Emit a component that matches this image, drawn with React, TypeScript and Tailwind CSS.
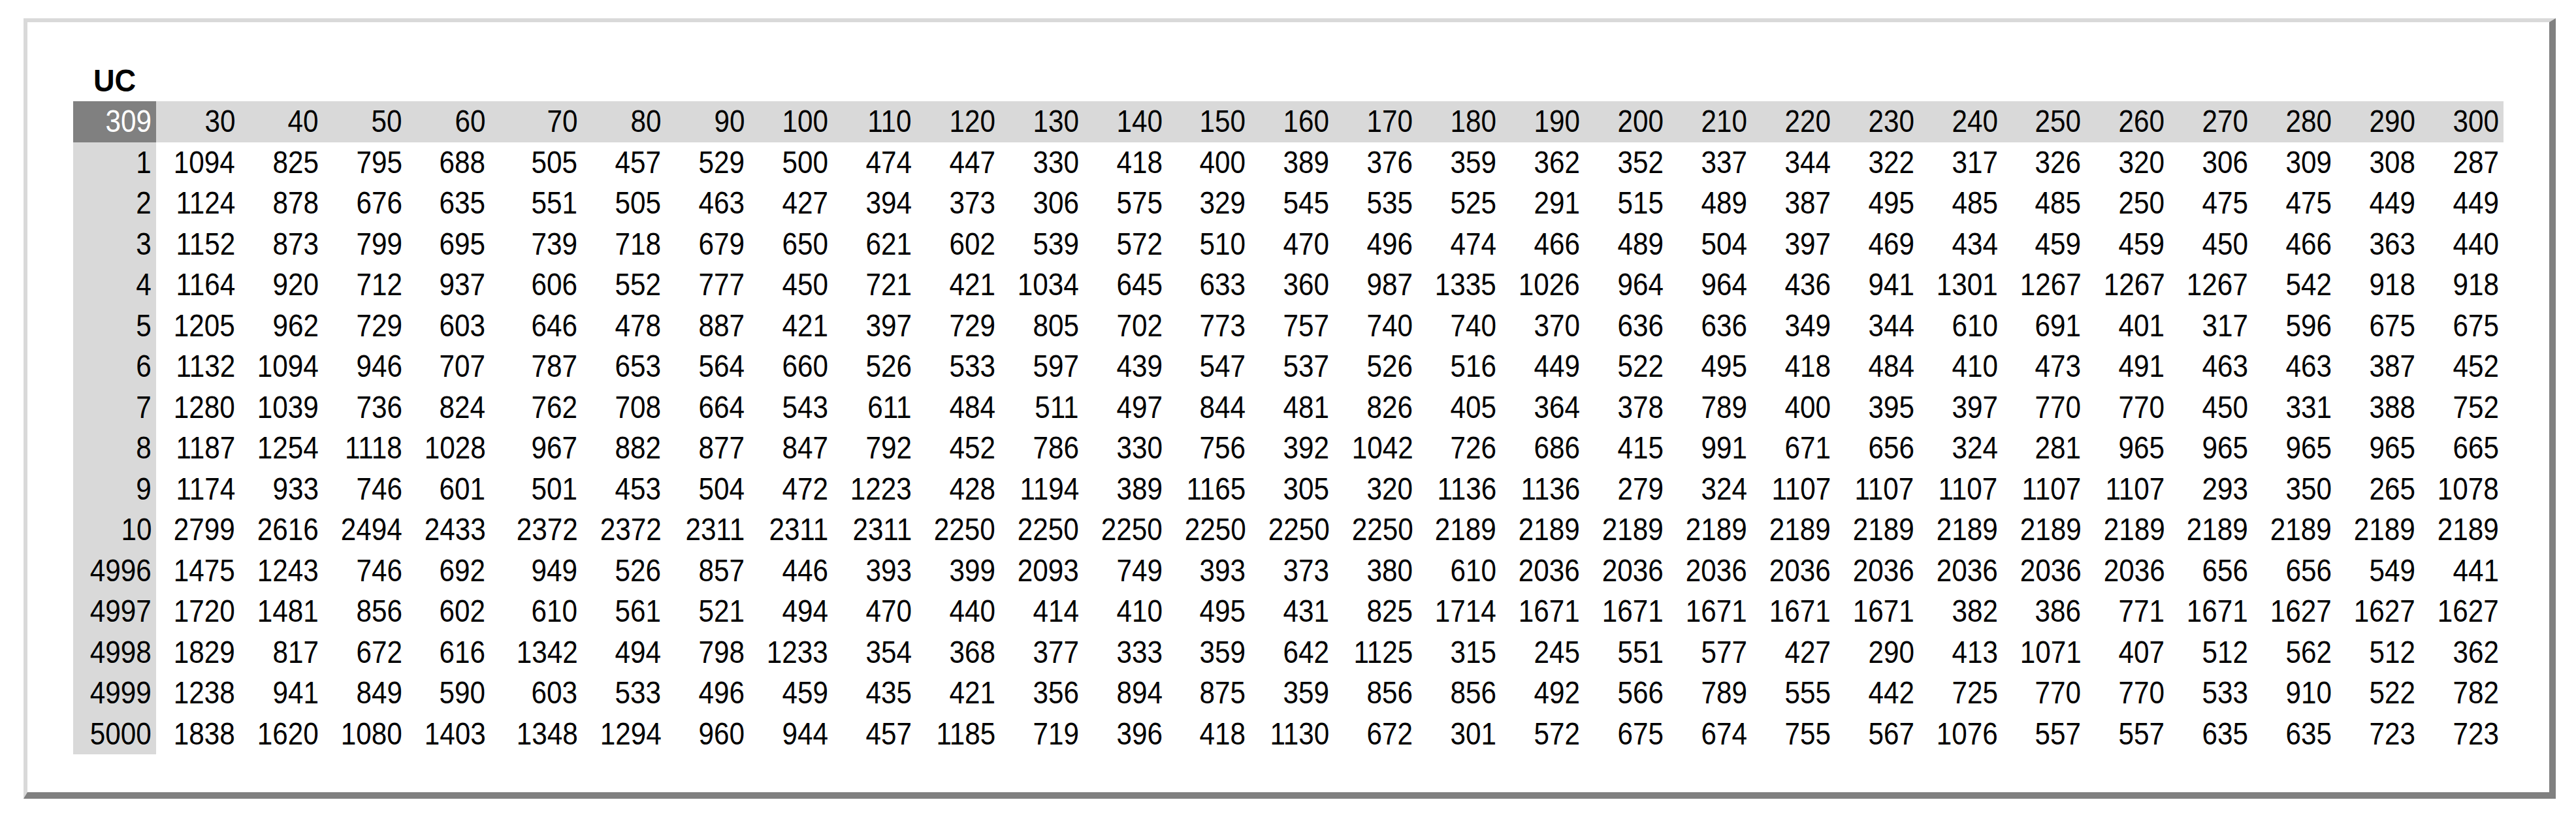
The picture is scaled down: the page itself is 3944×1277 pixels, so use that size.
const cols = [30, 40, 50, 60, 70, 80, 90, 100, 110, 120, 130, 140, 150, 160, 170, 180, 190, 200, 210, 220, 230, 240, 250, 260, 270, 280, 290, 300];

const rows: [number, number[]][] = [
  [1, [1094, 825, 795, 688, 505, 457, 529, 500, 474, 447, 330, 418, 400, 389, 376, 359, 362, 352, 337, 344, 322, 317, 326, 320, 306, 309, 308, 287]],
  [2, [1124, 878, 676, 635, 551, 505, 463, 427, 394, 373, 306, 575, 329, 545, 535, 525, 291, 515, 489, 387, 495, 485, 485, 250, 475, 475, 449, 449]],
  [3, [1152, 873, 799, 695, 739, 718, 679, 650, 621, 602, 539, 572, 510, 470, 496, 474, 466, 489, 504, 397, 469, 434, 459, 459, 450, 466, 363, 440]],
  [4, [1164, 920, 712, 937, 606, 552, 777, 450, 721, 421, 1034, 645, 633, 360, 987, 1335, 1026, 964, 964, 436, 941, 1301, 1267, 1267, 1267, 542, 918, 918]],
  [5, [1205, 962, 729, 603, 646, 478, 887, 421, 397, 729, 805, 702, 773, 757, 740, 740, 370, 636, 636, 349, 344, 610, 691, 401, 317, 596, 675, 675]],
  [6, [1132, 1094, 946, 707, 787, 653, 564, 660, 526, 533, 597, 439, 547, 537, 526, 516, 449, 522, 495, 418, 484, 410, 473, 491, 463, 463, 387, 452]],
  [7, [1280, 1039, 736, 824, 762, 708, 664, 543, 611, 484, 511, 497, 844, 481, 826, 405, 364, 378, 789, 400, 395, 397, 770, 770, 450, 331, 388, 752]],
  [8, [1187, 1254, 1118, 1028, 967, 882, 877, 847, 792, 452, 786, 330, 756, 392, 1042, 726, 686, 415, 991, 671, 656, 324, 281, 965, 965, 965, 965, 665]],
  [9, [1174, 933, 746, 601, 501, 453, 504, 472, 1223, 428, 1194, 389, 1165, 305, 320, 1136, 1136, 279, 324, 1107, 1107, 1107, 1107, 1107, 293, 350, 265, 1078]],
  [10, [2799, 2616, 2494, 2433, 2372, 2372, 2311, 2311, 2311, 2250, 2250, 2250, 2250, 2250, 2250, 2189, 2189, 2189, 2189, 2189, 2189, 2189, 2189, 2189, 2189, 2189, 2189, 2189]],
  [4996, [1475, 1243, 746, 692, 949, 526, 857, 446, 393, 399, 2093, 749, 393, 373, 380, 610, 2036, 2036, 2036, 2036, 2036, 2036, 2036, 2036, 656, 656, 549, 441]],
  [4997, [1720, 1481, 856, 602, 610, 561, 521, 494, 470, 440, 414, 410, 495, 431, 825, 1714, 1671, 1671, 1671, 1671, 1671, 382, 386, 771, 1671, 1627, 1627, 1627]],
  [4998, [1829, 817, 672, 616, 1342, 494, 798, 1233, 354, 368, 377, 333, 359, 642, 1125, 315, 245, 551, 577, 427, 290, 413, 1071, 407, 512, 562, 512, 362]],
  [4999, [1238, 941, 849, 590, 603, 533, 496, 459, 435, 421, 356, 894, 875, 359, 856, 856, 492, 566, 789, 555, 442, 725, 770, 770, 533, 910, 522, 782]],
  [5000, [1838, 1620, 1080, 1403, 1348, 1294, 960, 944, 457, 1185, 719, 396, 418, 1130, 672, 301, 572, 675, 674, 755, 567, 1076, 557, 557, 635, 635, 723, 723]],
];

// cell with excel-like right aligned, slightly condensed digits
function Cell({ v, className = "" }: { v: number | string; className?: string }) {
  return (
    <div className={`h-[62.5px] pr-[7px] text-right ${className}`}>
      <span className="inline-block origin-right scale-x-[0.88]">{v}</span>
    </div>
  );
}

export default function App() {
  return (
    <div className="min-h-screen bg-white pl-[36px] pt-[28px] font-['Liberation_Sans',Arial,sans-serif] text-black">
      <div className="h-[1195px] w-[3877px] border-b-[10px] border-l-[6px] border-r-[10px] border-t-[6px] border-b-[#808080] border-l-[#d9d9d9] border-r-[#808080] border-t-[#d9d9d9] bg-white pl-[70px] pt-[59px]">
        {/* title */}
        <div className="h-[62px] pl-[31px] text-[48px] font-bold leading-[62px]">
          <span className="inline-block origin-left scale-x-[0.94]">UC</span>
        </div>

        <div className="grid grid-cols-[127px_repeat(4,127.9px)_140.9px_repeat(23,127.9px)] text-[48px] leading-[62.5px]">
          {/* header row */}
          <Cell v={309} className="bg-[#808080] text-white" />
          {cols.map((c) => (
            <Cell key={c} v={c} className="bg-[#d9d9d9]" />
          ))}

          {rows.map(([id, vals]) => (
            <div key={id} className="contents">
              <Cell v={id} className="bg-[#d9d9d9]" />
              {vals.map((v, i) => (
                <Cell key={i} v={v} />
              ))}
            </div>
          ))}
        </div>
      </div>
    </div>
  );
}
